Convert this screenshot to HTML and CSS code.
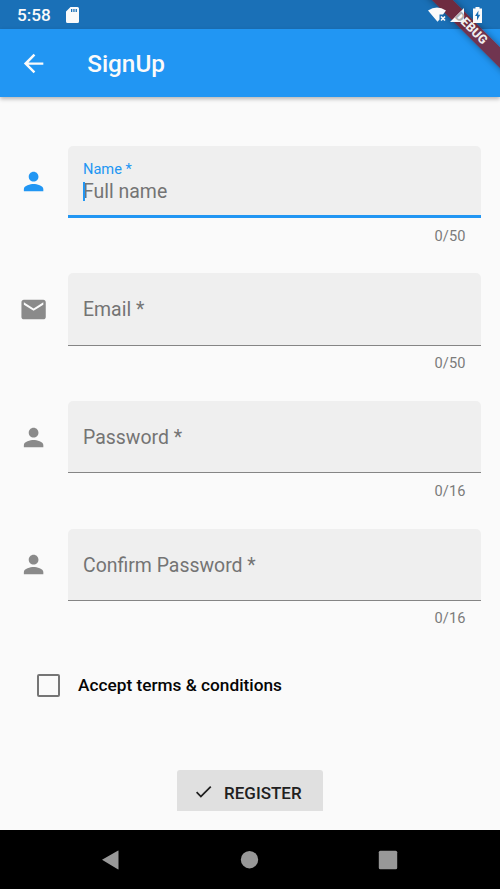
FILE: index.html
```html
<!DOCTYPE html>
<html lang="en">
<head>
<meta charset="utf-8">
<title>SignUp</title>
<link rel="stylesheet" href="styles.css">
</head>
<body>
<div class="screen">
  <div class="statusbar">
    <span class="clock">5:58</span>
    <svg class="sd" viewBox="0 0 13 16"><path fill="#fafafa" fill-rule="evenodd" d="M4.500 0H11.500Q13 0 13 1.500V14.500Q13 16 11.500 16H1.500Q0 16 0 14.500V4.500ZM5 2V5H6.300V2ZM7.300 2V5H8.600V2ZM9.600 2V5H10.900V2Z"/></svg>
    <div class="status-icons">
      <svg class="wifi" viewBox="0 0 20 16"><path fill="#fafafa" d="M0 3.500Q9 -2.500 18 3.500L15 7.500H11.500V12.500L9.500 14.800Z"/><path stroke="#fafafa" stroke-width="1.700" d="M13 9.500l4 4m0-4l-4 4"/></svg>
      <svg class="signal" viewBox="0 0 14 14"><path fill="#fafafa" d="M0 14L14 0V14Z"/></svg>
      <svg class="battery" viewBox="0 0 9 16"><path fill="#fafafa" fill-rule="evenodd" d="M2.500 0H6.500V1.500H9V16H0V1.500H2.500ZM5.500 3.500L2 9H4V13.500L7.200 7.800H5.200Z"/></svg>
    </div>
  </div>
  <header class="appbar">
    <svg class="icon back" viewBox="0 0 24 24"><path d="M20 11H7.830l5.590-5.590L12 4l-8 8 8 8 1.410-1.410L7.830 13H20v-2z"/></svg>
    <h1>SignUp</h1>
  </header>
  <div class="banner-clip"><div class="banner"></div></div>
  <div class="banner-clip text"><div class="banner"><span>D</span>EBUG</div></div>

  <main class="form">
    <div class="row active">
      <svg class="icon" viewBox="0 0 24 24"><path d="M12 12c2.210 0 4-1.790 4-4s-1.790-4-4-4-4 1.790-4 4 1.790 4 4 4zm0 2c-2.670 0-8 1.340-8 4v2h16v-2c0-2.660-5.330-4-8-4z"/></svg>
      <div class="field"><span class="label">Name *</span><span class="hint"><i class="caret"></i>Full name</span></div>
      <span class="counter">0/50</span>
    </div>
    <div class="row">
      <svg class="icon" viewBox="0 0 24 24"><path d="M20 4H4c-1.100 0-1.990.9-1.990 2L2 18c0 1.100.9 2 2 2h16c1.100 0 2-.9 2-2V6c0-1.100-.9-2-2-2zm0 4l-8 5-8-5V6l8 5 8-5v2z"/></svg>
      <div class="field"><span class="hint">Email *</span></div>
      <span class="counter">0/50</span>
    </div>
    <div class="row">
      <svg class="icon" viewBox="0 0 24 24"><path d="M12 12c2.210 0 4-1.790 4-4s-1.790-4-4-4-4 1.790-4 4 1.790 4 4 4zm0 2c-2.670 0-8 1.340-8 4v2h16v-2c0-2.660-5.330-4-8-4z"/></svg>
      <div class="field"><span class="hint">Password *</span></div>
      <span class="counter">0/16</span>
    </div>
    <div class="row">
      <svg class="icon" viewBox="0 0 24 24"><path d="M12 12c2.210 0 4-1.790 4-4s-1.790-4-4-4-4 1.790-4 4 1.790 4 4 4zm0 2c-2.670 0-8 1.340-8 4v2h16v-2c0-2.660-5.330-4-8-4z"/></svg>
      <div class="field"><span class="hint">Confirm Password *</span></div>
      <span class="counter">0/16</span>
    </div>
    <div class="terms"><span class="box"></span><span>Accept terms &amp; conditions</span></div>
    <div class="register">
      <svg viewBox="0 0 24 24"><path d="M9 16.170L4.830 12l-1.420 1.410L9 19 21 7l-1.410-1.410z"/></svg>
      <span>REGISTER</span>
    </div>
  </main>

  <nav class="navbar">
    <svg viewBox="0 0 20 20"><path d="M2 9.800L18.200 .6Q18.500 .4 18.500 1V19Q18.500 19.600 18.200 19.400Z"/></svg>
    <svg viewBox="0 0 20 20"><circle cx="10.500" cy="9.700" r="8.700"/></svg>
    <svg viewBox="0 0 20 20"><rect x=".8" y=".8" width="18.400" height="18.400" rx="1.500"/></svg>
  </nav>
</div>
</body>
</html>
```

FILE: styles.css
```css
* { box-sizing: border-box; }
body { margin: 0; font-family: Roboto, sans-serif; background: #fafafa; }
.screen {
  position: relative;
  width: 500px;
  height: 889px;
  overflow: hidden;
  display: flex;
  flex-direction: column;
}
svg { display: block; flex: none; }

.statusbar {
  flex: none;
  height: 29px;
  display: flex;
  align-items: center;
  padding: 0 17px;
  background: #1a70b7;
  color: #fafafa;
}
.clock { font-size: 17.200px; font-weight: 500; line-height: 20px; padding-top: 1px; }
.sd { width: 13px; height: 16px; margin-left: 15px; }
.status-icons { position: relative; z-index: 2; display: flex; align-items: center; margin-left: auto; }
.wifi { width: 20px; height: 16px; }
.signal { width: 14px; height: 14px; margin-left: 2px; }
.battery { width: 9px; height: 16px; margin: 0 1px 0 9px; }

.appbar {
  flex: none;
  height: 68px;
  display: flex;
  align-items: center;
  padding-left: 19px;
  background: #2196f3;
  color: #fafafa;
  box-shadow: 0 2px 4px rgba(0, 0, 0, .28);
}
.icon { width: 29.200px; height: 29.200px; fill: currentColor; }
.appbar .icon { margin-top: 1px; }
.appbar h1 { margin: 2px 0 0 39px; font-size: 24.300px; font-weight: 500; line-height: 30px; }

.banner-clip {
  position: absolute;
  z-index: 1;
  top: 0;
  right: 0;
  width: 100px;
  height: 97px;
  overflow: hidden;
}
.banner {
  position: absolute;
  left: 1px;
  top: 21.400px;
  width: 140px;
  height: 14.600px;
  transform: rotate(45deg);
  background: rgba(140, 19, 23, .74);
  box-shadow: 0 0 7px rgba(0, 0, 0, .4);
  color: #f0f0f0;
  font-size: 12.400px;
  font-weight: 800;
  line-height: 14.600px;
  text-align: center;
}
.banner-clip.text { z-index: 3; }
.text .banner { background: none; box-shadow: none; }
.banner span { color: #b0b0b0; }

.form { flex: 1; display: flex; flex-direction: column; padding: 48.800px 19px 0; }
.row {
  height: 127.600px;
  flex: none;
  display: grid;
  grid-template-columns: 29px 413px;
  grid-template-rows: 72.400px 36px;
  column-gap: 20px;
  align-items: center;
  color: #8a8a8a;
}
.field {
  height: 100%;
  display: flex;
  flex-direction: column;
  justify-content: center;
  padding: 0 15px;
  background: #efefef;
  border-bottom: 1.500px solid #858585;
  border-radius: 5px 5px 0 0;
}
.hint { position: relative; color: #747474; font-size: 19.440px; line-height: 23px; top: 1px; }
.row:nth-child(2) .hint { top: .5px; }
.label { font-size: 14.600px; line-height: 18px; color: #2196f3; margin-top: 3px; }
.active { color: #2196f3; }
.active .field { border-bottom: 3px solid #2196f3; }
.active .hint { line-height: 26px; }
.caret { position: absolute; left: 0; top: 3px; width: 2px; height: 19px; background: #2196f3; }
.counter { grid-column: 2; justify-self: end; margin-top: -1px; padding-right: 15.500px; color: #7b7b7b; font-size: 14.600px; line-height: 18px; letter-spacing: .1px; }

.terms {
  display: flex;
  align-items: center;
  gap: 18px;
  height: 24px;
  margin: 17.200px 0 0 18px;
  color: #050505;
  font-size: 17.250px;
  font-weight: 500;
}
.box { width: 23px; height: 23px; border: 2.400px solid #757575; border-radius: 2px; }
.register {
  align-self: center;
  width: 146px;
  height: 41px;
  margin-top: 73px;
  display: flex;
  align-items: center;
  padding: 4px 0 0 16px;
  gap: 10px;
  background: #e0e0e0;
  border-radius: 3px 3px 0 0;
  color: #202020;
  font-size: 17px;
  font-weight: 500;
}
.register svg { width: 21px; height: 21px; margin-top: -2px; fill: currentColor; }

.navbar {
  flex: none;
  height: 59px;
  display: flex;
  align-items: center;
  justify-content: space-between;
  padding: 0 102px 0 100px;
  background: #000;
}
.navbar svg { width: 20px; height: 20px; fill: #989898; }
```
